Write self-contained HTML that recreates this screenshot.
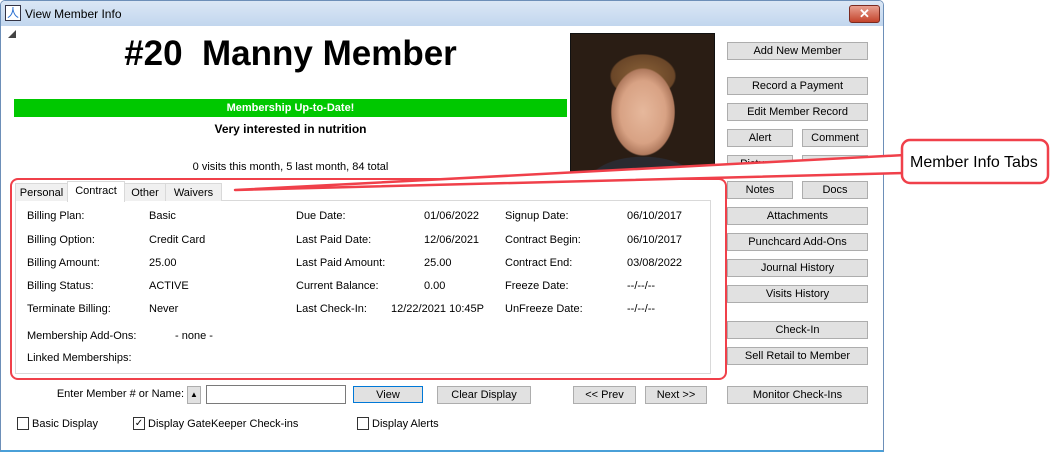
<!DOCTYPE html>
<html><head><style>
body{margin:0;width:1052px;height:455px;background:#fff;position:relative;overflow:hidden;font-family:"Liberation Sans",sans-serif;font-size:11px;color:#000}
.a{position:absolute}
.win{left:0;top:0;width:884px;height:452px;border:1px solid #6d8fb8;border-bottom:2px solid #4aa0d8;border-radius:5px 5px 0 0;background:#fff;box-sizing:border-box}
.title{left:1px;top:1px;width:882px;height:25px;background:linear-gradient(#dbe7f5,#c2d6ee);border-radius:4px 4px 0 0}
.btn{position:absolute;height:16px;background:#e1e1e1;border:1px solid #adadad;text-align:center;line-height:16px;font-size:11px}
.t{position:absolute;white-space:nowrap}
.tab{position:absolute;top:183px;height:17px;background:#f0f0f0;border:1px solid #d9d9d9;border-bottom:none;text-align:center;line-height:18px;font-size:11px}
.cb{position:absolute;width:10px;height:11px;border:1px solid #333;background:#fff;top:417px}
</style></head><body>
<div class="a win"></div>
<div class="a title"></div>
<div class="a" style="left:5px;top:5px;width:14px;height:14px;border:1px solid #334;background:#fff;color:#2a6fd0;font-size:12px;line-height:14px;text-align:center">人</div>
<div class="t" style="left:25px;top:7px;font-size:12px">View Member Info</div>
<div class="a" style="left:849px;top:5px;width:29px;height:16px;border:1px solid #7a2a20;border-radius:3px;background:linear-gradient(#e8a090,#c4442c);color:#fff;font-weight:bold;text-align:center;line-height:16px;font-size:13px">✕</div>
<div class="a" style="left:8px;top:30px;width:0;height:0;border-left:8px solid transparent;border-bottom:8px solid #444"></div>
<div class="t" style="left:14px;width:553px;top:34px;text-align:center;font-size:35px;font-weight:bold">#20&nbsp; Manny Member</div>
<div class="a" style="left:14px;top:99px;width:553px;height:18px;background:#00c800;color:#fff;font-weight:bold;text-align:center;line-height:18px">Membership Up-to-Date!</div>
<div class="t" style="left:14px;width:553px;top:122px;text-align:center;font-weight:bold;font-size:12px">Very interested in nutrition</div>
<div class="t" style="left:14px;width:553px;top:161px;text-align:center">0 visits this month, 5 last month, 84 total</div>
<div class="a" style="left:570px;top:33px;width:143px;height:137px;background:radial-gradient(ellipse 60px 30px at 72px 150px,#2a2a30 0,#2a2a30 90%,transparent 92%),radial-gradient(ellipse 38px 52px at 72px 78px,#e6b89c 0,#d8a284 60%,#b07a5e 82%,transparent 85%),radial-gradient(ellipse 45px 30px at 72px 42px,#8a6238 0,#6a4628 70%,transparent 74%),#2a1d14;border:1px solid #111"></div>
<div class="btn" style="left:727px;top:42px;width:139px">Add New Member</div>
<div class="btn" style="left:727px;top:77px;width:139px">Record a Payment</div>
<div class="btn" style="left:727px;top:103px;width:139px">Edit Member Record</div>
<div class="btn" style="left:727px;top:129px;width:64px">Alert</div>
<div class="btn" style="left:802px;top:129px;width:64px">Comment</div>
<div class="btn" style="left:727px;top:155px;width:64px">Pictures</div>
<div class="btn" style="left:802px;top:155px;width:64px">ID</div>
<div class="btn" style="left:727px;top:181px;width:64px">Notes</div>
<div class="btn" style="left:802px;top:181px;width:64px">Docs</div>
<div class="btn" style="left:727px;top:207px;width:139px">Attachments</div>
<div class="btn" style="left:727px;top:233px;width:139px">Punchcard Add-Ons</div>
<div class="btn" style="left:727px;top:259px;width:139px">Journal History</div>
<div class="btn" style="left:727px;top:285px;width:139px">Visits History</div>
<div class="btn" style="left:727px;top:321px;width:139px">Check-In</div>
<div class="btn" style="left:727px;top:347px;width:139px">Sell Retail to Member</div>
<div class="btn" style="left:727px;top:386px;width:139px">Monitor Check-Ins</div>
<div class="a" style="left:15px;top:200px;width:694px;height:172px;border:1px solid #d9d9d9;background:#fff"></div>
<div class="tab" style="left:15px;width:51px">Personal</div>
<div class="tab" style="left:67px;width:56px;top:181px;height:20px;background:#fff;line-height:18px">Contract</div>
<div class="tab" style="left:124px;width:40px">Other</div>
<div class="tab" style="left:165px;width:55px">Waivers</div>
<div class="t" style="left:27px;top:210px">Billing Plan:</div><div class="t" style="left:149px;top:210px">Basic</div>
<div class="t" style="left:27px;top:234px">Billing Option:</div><div class="t" style="left:149px;top:234px">Credit Card</div>
<div class="t" style="left:27px;top:257px">Billing Amount:</div><div class="t" style="left:149px;top:257px">25.00</div>
<div class="t" style="left:27px;top:280px">Billing Status:</div><div class="t" style="left:149px;top:280px">ACTIVE</div>
<div class="t" style="left:27px;top:303px">Terminate Billing:</div><div class="t" style="left:149px;top:303px">Never</div>
<div class="t" style="left:27px;top:330px">Membership Add-Ons:</div><div class="t" style="left:175px;top:330px">- none -</div>
<div class="t" style="left:27px;top:352px">Linked Memberships:</div>
<div class="t" style="left:296px;top:210px">Due Date:</div><div class="t" style="left:424px;top:210px">01/06/2022</div>
<div class="t" style="left:296px;top:234px">Last Paid Date:</div><div class="t" style="left:424px;top:234px">12/06/2021</div>
<div class="t" style="left:296px;top:257px">Last Paid Amount:</div><div class="t" style="left:424px;top:257px">25.00</div>
<div class="t" style="left:296px;top:280px">Current Balance:</div><div class="t" style="left:424px;top:280px">0.00</div>
<div class="t" style="left:296px;top:303px">Last Check-In:</div><div class="t" style="left:391px;top:303px">12/22/2021 10:45P</div>
<div class="t" style="left:505px;top:210px">Signup Date:</div><div class="t" style="left:627px;top:210px">06/10/2017</div>
<div class="t" style="left:505px;top:234px">Contract Begin:</div><div class="t" style="left:627px;top:234px">06/10/2017</div>
<div class="t" style="left:505px;top:257px">Contract End:</div><div class="t" style="left:627px;top:257px">03/08/2022</div>
<div class="t" style="left:505px;top:280px">Freeze Date:</div><div class="t" style="left:627px;top:280px">--/--/--</div>
<div class="t" style="left:505px;top:303px">UnFreeze Date:</div><div class="t" style="left:627px;top:303px">--/--/--</div>
<div class="a" style="left:10px;top:178px;width:713px;height:198px;border:2px solid #f0404a;border-radius:8px"></div>
<svg class="a" style="left:0;top:0" width="1052" height="455">
<polygon points="235,190 905,155 905,173" fill="#fff" stroke="#f0404a" stroke-width="2.5" stroke-linejoin="round"/>
<rect x="902" y="140" width="146" height="43" rx="8" fill="#fff" stroke="#f0404a" stroke-width="2.5"/>
<text x="910" y="167" font-family="Liberation Sans" font-size="16">Member Info Tabs</text>
</svg>
<div class="t" style="left:40px;width:144px;top:388px;text-align:right">Enter Member # or Name:</div>
<div class="a" style="left:187px;top:386px;width:12px;height:16px;background:#e1e1e1;border:1px solid #adadad;font-size:8px;text-align:center;line-height:16px">▲</div>
<div class="a" style="left:206px;top:385px;width:138px;height:17px;border:1px solid #7a7a7a;background:#fff"></div>
<div class="btn" style="left:353px;top:386px;width:68px;border:1px solid #0078d7;height:15px">View</div>
<div class="btn" style="left:437px;top:386px;width:92px">Clear Display</div>
<div class="btn" style="left:573px;top:386px;width:61px">&lt;&lt; Prev</div>
<div class="btn" style="left:645px;top:386px;width:60px">Next &gt;&gt;</div>
<div class="cb" style="left:17px"></div><div class="t" style="left:32px;top:418px">Basic Display</div>
<div class="cb" style="left:133px;font-size:10px;line-height:11px;text-align:center">✓</div><div class="t" style="left:148px;top:418px">Display GateKeeper Check-ins</div>
<div class="cb" style="left:357px"></div><div class="t" style="left:372px;top:418px">Display Alerts</div>
</body></html>
